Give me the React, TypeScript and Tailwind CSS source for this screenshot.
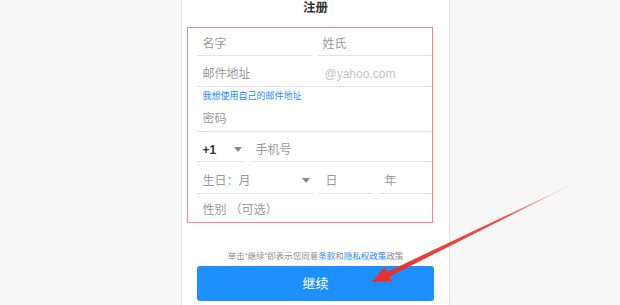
import React from 'react';

const FONT = "font-['Liberation_Sans','Noto_Sans_CJK_SC',sans-serif]";

/* Small grey select caret. */
function Caret() {
  return (
    <svg width="8" height="5" viewBox="0 0 8 5" className="shrink-0">
      <path d="M0 0 L8 0 L4 5 Z" fill="#8a8a8a" />
    </svg>
  );
}

function Arrow() {
  return (
    <svg className="absolute left-0 top-0 pointer-events-none" width="620" height="305" viewBox="0 0 620 305">
      <defs>
        <linearGradient id="arrowFade" x1="575" y1="183" x2="372" y2="282" gradientUnits="userSpaceOnUse">
          <stop offset="0" stopColor="#f05050" stopOpacity="0.15" />
          <stop offset="0.35" stopColor="#ec3b37" stopOpacity="0.9" />
          <stop offset="1" stopColor="#e8302c" />
        </linearGradient>
      </defs>
      <polygon
        points="575,183 389.6,276.4 392.3,281.4 372,282 384.6,266.8 387.2,271.9"
        fill="url(#arrowFade)"
      />
    </svg>
  );
}

export default function App() {
  return (
    <div className={`relative w-[620px] h-[305px] overflow-hidden bg-[#f7f7f7] ${FONT}`}>
      <div className="flex h-full">
        <div className="w-[181px] shrink-0" />
        <div className="w-[269px] shrink-0 h-full bg-white border-x border-[#e3e3e3]">
          {/* Title */}
          <div className="h-[27px] pt-[1px] text-center text-[12.5px] leading-[15px] font-bold text-[#333]">注册</div>

          {/* Highlighted form block */}
          <div className="ml-[5px] w-[246px] border-[1.5px] border-[#f08a8a] pl-[8.5px] text-[12px] text-[#9a9a9a]">
            <div className="flex gap-[6px]">
              <div className="w-[115px] h-[28px] pt-[5px] pl-[6px] flex items-center border-b border-[#e2e2e2]">名字</div>
              <div className="flex-1 h-[28px] pt-[5px] pl-[5px] flex items-center border-b border-[#e2e2e2]">姓氏</div>
            </div>
            <div className="h-[31px] pt-[6px] pl-[6px] flex items-center border-b border-[#e2e2e2]">
              <span className="w-[122px]">邮件地址</span>
              <span className="text-[#c4c4c4]">@yahoo.com</span>
            </div>
            <div className="h-[20px] pl-[6px] flex items-center text-[9px] text-[#1a8cff]">我想使用自己的邮件地址</div>
            <div className="h-[25px] pl-[6px] flex items-center border-b border-[#e2e2e2]">密码</div>
            <div className="flex gap-[6px]">
              <div className="w-[47px] h-[30px] pt-[6px] pl-[6px] pr-[2px] flex items-center justify-between border-b border-[#e2e2e2]">
                <span className="font-bold text-[#333]">+1</span>
                <Caret />
              </div>
              <div className="flex-1 h-[30px] pt-[6px] pl-[6px] flex items-center border-b border-[#e2e2e2]">手机号</div>
            </div>
            <div className="flex gap-[6px]">
              <div className="w-[116px] h-[32px] pt-[6px] pl-[6px] pr-[3px] flex items-center justify-between border-b border-[#e2e2e2]">
                <span>生日：月</span>
                <Caret />
              </div>
              <div className="w-[54px] h-[32px] pt-[6px] pl-[7px] flex items-center border-b border-[#e2e2e2]">日</div>
              <div className="flex-1 h-[32px] pt-[6px] pl-[6px] flex items-center border-b border-[#e2e2e2]">年</div>
            </div>
            <div className="h-[28px] pt-[4px] pl-[6px] flex items-center whitespace-pre">性别 （可选）</div>
          </div>

          {/* Terms */}
          <div className="mt-[26px] h-[14px] leading-[14px] text-center text-[8.5px] text-[#8c8c8c]">
            单击“继续”即表示您同意<span className="text-[#1a8cff]">条款</span>和<span className="text-[#1a8cff]">隐私权政策</span>政策
          </div>

          <button className="mt-[3px] mx-[15px] w-[237px] h-[35px] rounded-[3px] bg-[#1e8fff] text-white text-[13px] flex items-center justify-center">
            继续
          </button>
        </div>
      </div>
      <Arrow />
    </div>
  );
}
